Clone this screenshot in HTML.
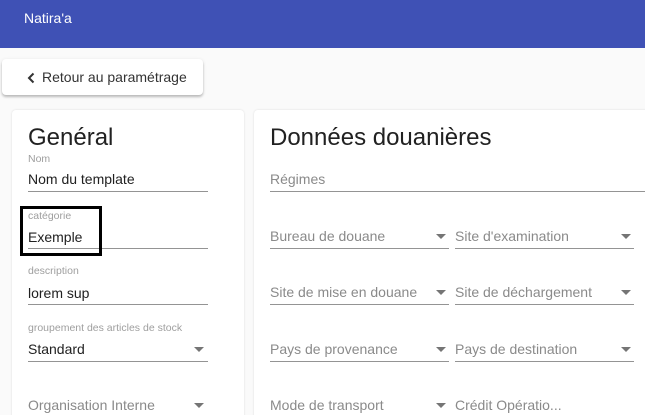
<!DOCTYPE html>
<html><head><meta charset="utf-8"><style>
*{box-sizing:border-box;margin:0;padding:0}
html,body{width:645px;height:415px;overflow:hidden}
body{background:#fafafa;font-family:"Liberation Sans",Arial,sans-serif;position:relative;color:#212121}
.hdr{position:absolute;left:0;top:0;width:645px;height:48px;background:#3f51b5;color:#fff;font-size:14px}
.hdr span{position:absolute;left:24px;top:10px}
.btn{position:absolute;left:2px;top:59px;width:201px;height:36px;background:#fff;border-radius:4px;box-shadow:0 2px 2px rgba(0,0,0,.2),0 1px 4px rgba(0,0,0,.1);font-size:14px;color:#333}
.btn span{position:absolute;left:40px;top:10px}
.btn svg{position:absolute;left:25px;top:13px}
.card{position:absolute;top:110px;height:320px;background:#fff;border-radius:4px;box-shadow:0 0 2px rgba(0,0,0,.12)}
.t{position:absolute;font-size:24px;color:#212121}
.lab{position:absolute;font-size:10.5px;color:#9e9e9e}
.val{position:absolute;font-size:14px;color:#212121}
.ph{position:absolute;font-size:14px;color:#8a8a8a}
.ul{position:absolute;height:1px;background:#949494}
.ar{position:absolute;width:0;height:0;border-left:5px solid transparent;border-right:5px solid transparent;border-top:5px solid #757575}
.box{position:absolute;left:20px;top:206px;width:82px;height:50px;border:3px solid #000}
</style></head><body>
<div class="hdr"><span>Natira'a</span></div>
<div class="btn"><svg width="8" height="12" viewBox="0 0 8 12"><path d="M6.5 1.5L2 6l4.5 4.5" stroke="#333" stroke-width="2" fill="none"/></svg><span>Retour au paramétrage</span></div>
<div class="card" style="left:12px;width:232px"></div>
<div class="card" style="left:254px;width:400px"></div>

<div class="t" style="left:28px;top:124px">Genéral</div>
<div class="lab" style="left:28px;top:153px">Nom</div>
<div class="val" style="left:28px;top:171px">Nom du template</div>
<div class="ul" style="left:28px;top:191px;width:180px"></div>
<div class="lab" style="left:28px;top:210px">catégorie</div>
<div class="val" style="left:28px;top:229px">Exemple</div>
<div class="ul" style="left:28px;top:248px;width:180px"></div>
<div class="box"></div>
<div class="lab" style="left:28px;top:265px">description</div>
<div class="val" style="left:28px;top:285px">lorem sup</div>
<div class="ul" style="left:28px;top:304px;width:180px"></div>
<div class="lab" style="left:28px;top:322px">groupement des articles de stock</div>
<div class="val" style="left:28px;top:341px">Standard</div>
<div class="ar" style="left:194px;top:347px"></div>
<div class="ul" style="left:28px;top:361px;width:180px"></div>
<div class="ph" style="left:28px;top:397px">Organisation Interne</div>
<div class="ar" style="left:194px;top:403px"></div>

<div class="t" style="left:270px;top:124px">Données douanières</div>
<div class="ph" style="left:270px;top:171px">Régimes</div>
<div class="ul" style="left:270px;top:191px;width:375px"></div>

<div class="ph" style="left:270px;top:228px">Bureau de douane</div>
<div class="ar" style="left:436px;top:234px"></div>
<div class="ul" style="left:270px;top:248px;width:179px"></div>
<div class="ph" style="left:455px;top:228px">Site d'examination</div>
<div class="ar" style="left:621px;top:234px"></div>
<div class="ul" style="left:455px;top:248px;width:179px"></div>

<div class="ph" style="left:270px;top:284px">Site de mise en douane</div>
<div class="ar" style="left:436px;top:290px"></div>
<div class="ul" style="left:270px;top:304px;width:179px"></div>
<div class="ph" style="left:455px;top:284px">Site de déchargement</div>
<div class="ar" style="left:621px;top:290px"></div>
<div class="ul" style="left:455px;top:304px;width:179px"></div>

<div class="ph" style="left:270px;top:341px">Pays de provenance</div>
<div class="ar" style="left:436px;top:347px"></div>
<div class="ul" style="left:270px;top:361px;width:179px"></div>
<div class="ph" style="left:455px;top:341px">Pays de destination</div>
<div class="ar" style="left:621px;top:347px"></div>
<div class="ul" style="left:455px;top:361px;width:179px"></div>

<div class="ph" style="left:270px;top:397px">Mode de transport</div>
<div class="ar" style="left:436px;top:403px"></div>
<div class="ph" style="left:455px;top:397px">Crédit Opératio...</div>
</body></html>
